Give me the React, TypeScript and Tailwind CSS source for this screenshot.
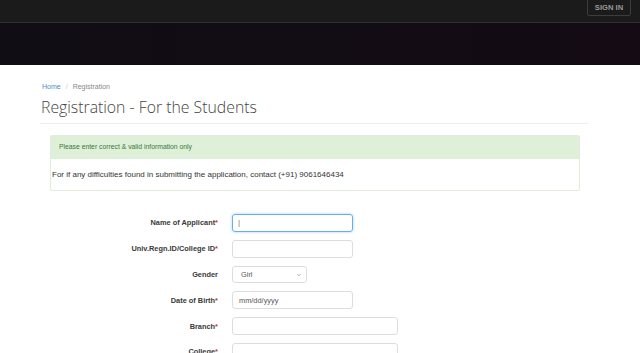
import React from 'react';
import { ChevronDown } from 'lucide-react';

const sans = { fontFamily: '"Liberation Sans", Arial, sans-serif' };

const Label = ({ text, required = true }: { text: string; required?: boolean }) => (
  <label className="w-[218px] shrink-0 text-right text-[7.4px] font-bold text-[#3a3a3a]" style={sans}>
    {text}
    {required && <span className="text-[#c0392b]">*</span>}
  </label>
);

const Row = ({ children }: { children: React.ReactNode }) => (
  <div className="flex h-[18px] items-center gap-[14px]">{children}</div>
);

export default function App() {
  return (
    <div className="min-h-[353px] w-[640px] overflow-hidden bg-white" style={sans}>
      <nav className="flex h-[23px] justify-end border-b border-[#2f2f2f] bg-[#1b1b1b] pr-[9px]">
        <button className="-mt-px flex h-[17px] w-[44px] items-center justify-center rounded-b-[2px] border border-[#3d3d3d] text-[7.6px] font-bold text-[#9a9a9a]">
          SIGN IN
        </button>
      </nav>
      <div className="h-[42px] bg-gradient-to-r from-[#110d14] via-[#120c15] to-[#140b14]" />

      <main className="px-[40px] pt-[17px]">
        <div className="flex items-center gap-[5px] pl-[2px] text-[7px] leading-[10px]">
          <span className="text-[#4a90c8]">Home</span>
          <span className="text-[#ccc]">/</span>
          <span className="text-[#888]">Registration</span>
        </div>
        <h1
          className="mt-[4px] pl-[1px] text-[15.8px] font-light leading-[22px] text-[#444]"
          style={{ fontFamily: '"Open Sans", sans-serif' }}
        >
          Registration - For the Students
        </h1>
        <div className="mt-[5px] w-[548px] border-t border-[#eee]" />

        <div className="ml-[10px] mt-[11px] w-[530px] rounded-[2px] border border-[#e2ecdc]">
          <div className="flex h-[22px] items-center bg-[#dff0d8] pl-[8px] text-[6.8px] text-[#3c763d]">
            Please enter correct &amp; valid information only
          </div>
          <div className="flex h-[32px] items-center border-t border-[#e2ecdc] pl-[1px] text-[8px] text-[#333]">
            For if any difficulties found in submitting the application, contact (+91) 9061646434
          </div>
        </div>
      </main>

      <form className="mt-[23px] flex flex-col gap-[7.8px]">
        <Row>
          <Label text="Name of Applicant" />
          <div className="flex h-[18px] w-[121px] items-center rounded-[3px] border border-[#66afe9] pl-[5px] text-[8px] text-[#777] shadow-[0_0_3px_rgba(102,175,233,0.6)]">
            |
          </div>
        </Row>
        <Row>
          <Label text="Univ.Regn.ID/College ID" />
          <input className="h-[18px] w-[121px] rounded-[3px] border border-[#ddd] outline-none" />
        </Row>
        <Row>
          <Label text="Gender" required={false} />
          <div className="relative flex h-[17px] w-[75px] items-center rounded-[3px] border border-[#ddd] pl-[8px] text-[7.4px] text-[#555]">
            Girl
            <ChevronDown className="absolute right-[4px] top-[5px] h-[6px] w-[6px] text-[#666]" strokeWidth={2} />
          </div>
        </Row>
        <Row>
          <Label text="Date of Birth" />
          <div className="flex h-[18px] w-[121px] items-center rounded-[3px] border border-[#ddd] pl-[6px] text-[7.4px] text-[#555]">
            mm/dd/yyyy
          </div>
        </Row>
        <Row>
          <Label text="Branch" />
          <input className="h-[18px] w-[166px] rounded-[3px] border border-[#ddd] outline-none" />
        </Row>
        <Row>
          <Label text="College" />
          <input className="h-[18px] w-[166px] rounded-[3px] border border-[#ddd] outline-none" />
        </Row>
      </form>
    </div>
  );
}
